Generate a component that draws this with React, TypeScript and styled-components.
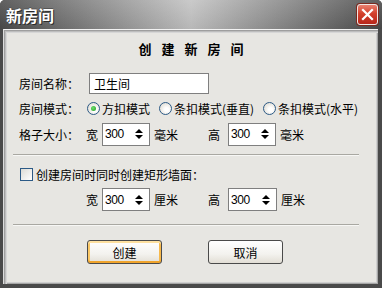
import React from "react";
import styled, { createGlobalStyle } from "styled-components";

const GlobalStyle = createGlobalStyle`
  html, body {
    margin: 0;
    padding: 0;
    background: #ffffff;
  }
  body {
    font-family: "Noto Sans CJK SC", "Liberation Sans", sans-serif;
    font-size: 12px;
    color: #000;
  }
`;

const Window = styled.div`
  width: 382px;
  height: 288px;
  display: flex;
  flex-direction: column;
  background: #4a4a4a;
  border-radius: 5px 5px 0 0;
  overflow: hidden;
`;

const TitleBar = styled.div`
  height: 29px;
  flex: none;
  display: flex;
  align-items: center;
  justify-content: space-between;
  padding: 0 4px 0 6px;
  background:
    linear-gradient(to bottom, rgba(255, 255, 255, 0.12), rgba(0, 0, 0, 0.06)),
    linear-gradient(to right, #4b4b4b 0%, #858585 24%, #c3c3c3 50%, #858585 76%, #4a4a4a 100%);
`;

const Title = styled.span`
  color: #fff;
  font-size: 16px;
  font-weight: bold;
  text-shadow: 1px 1px 0 #2a2a2a, -1px 0 0 #555, 0 -1px 0 #555;
`;

const CloseButton = styled.div`
  width: 21px;
  height: 21px;
  box-sizing: border-box;
  border: 1px solid #f0e6e4;
  border-radius: 3px;
  background: linear-gradient(to bottom, #e9806f, #d3402c 45%, #b8261a);
  display: flex;
  align-items: center;
  justify-content: center;
  box-shadow: 0 0 0 1px #7a2a20;
`;

const Client = styled.div`
  flex: 1;
  margin: 0 4px 4px 3px;
  background: #e7e6e2;
  border-top: 1px solid #f2f2f2;
  border-left: 1px solid #dcdcdc;
  box-shadow:
    inset 1px 1px 0 #9e9e9e,
    inset 2px 2px 0 #bdbdbd,
    inset 3px 3px 0 #d6d6d6,
    inset -1px -1px 0 #a6a6a6,
    inset -2px -2px 0 #cfcfcf;
  display: flex;
  flex-direction: column;
  padding-left: 15px;
`;

const Heading = styled.div`
  margin: 8px 0 0 -15px;
  height: 22px;
  line-height: 22px;
  text-align: center;
  font-size: 13px;
  font-weight: bold;
  letter-spacing: 10px;
  padding-left: 10px;
`;

const Row = styled.div<{ $top: number; $h: number }>`
  display: flex;
  align-items: center;
  height: ${(p) => p.$h}px;
  margin-top: ${(p) => p.$top}px;
  white-space: nowrap;
`;

const Label = styled.span<{ $w: number }>`
  width: ${(p) => p.$w}px;
  flex: none;
`;

const TextInput = styled.div`
  width: 120px;
  height: 21px;
  box-sizing: border-box;
  margin-left: 2px;
  border: 1px solid #7f7f7f;
  background: #fff;
  padding-left: 4px;
  line-height: 19px;
`;

const RadioItem = styled.label<{ $w?: number }>`
  display: flex;
  align-items: center;
  gap: 2px;
  ${(p) => (p.$w ? `width: ${p.$w}px;` : "")}
  flex: none;
`;

const RadioDot = styled.span<{ $checked?: boolean }>`
  width: 13px;
  height: 13px;
  box-sizing: border-box;
  border-radius: 50%;
  border: 1px solid #2c5a86;
  background: radial-gradient(circle at 60% 60%, #ffffff 20%, #e6e3dc 70%, #cfcabe);
  display: flex;
  align-items: center;
  justify-content: center;
  &::after {
    content: "";
    display: ${(p) => (p.$checked ? "block" : "none")};
    width: 5px;
    height: 5px;
    border-radius: 50%;
    background: radial-gradient(circle at 40% 40%, #6fe06f, #1f9a1f);
  }
`;

const Spinner = styled.div<{ $w: number }>`
  width: ${(p) => p.$w}px;
  height: 23px;
  box-sizing: border-box;
  border: 1px solid #7f7f7f;
  background: #fff;
  display: flex;
  align-items: center;
  justify-content: space-between;
  padding: 0 6px 0 2px;
  flex: none;
`;

const SpinValue = styled.span`
  font-family: "Liberation Sans", sans-serif;
  font-size: 12px;
  letter-spacing: -0.4px;
`;

const Unit = styled.span<{ $w?: number }>`
  margin-left: 4px;
  ${(p) => (p.$w ? `width: ${p.$w}px;` : "")}
  flex: none;
`;

const Separator = styled.div<{ $top: number }>`
  margin: ${(p) => p.$top}px 0 0 -6px;
  width: 346px;
  height: 0;
  border-top: 1px solid #a9a8a2;
  border-bottom: 1px solid #f7f7f5;
`;

const CheckBox = styled.span`
  width: 13px;
  height: 13px;
  box-sizing: border-box;
  margin: 0 3px 0 1px;
  border: 1px solid #2c5a86;
  background: linear-gradient(135deg, #dcdbd5, #ffffff);
  flex: none;
`;

const ButtonRow = styled.div`
  display: flex;
  gap: 46px;
  margin-top: 14px;
  padding-left: 68px;
`;

const Button = styled.div<{ $default?: boolean }>`
  width: 75px;
  height: 24px;
  box-sizing: border-box;
  border: 1px solid #4a4a4a;
  border-radius: 3px;
  background: linear-gradient(to bottom, #ffffff, #f3f2ee 60%, #e2ded5);
  display: flex;
  align-items: center;
  justify-content: center;
  ${(p) =>
    p.$default
      ? `box-shadow: inset 0 2px 0 #fde0a0, inset 0 -2px 0 #f0a42c, inset 2px 0 0 #fbc866, inset -2px 0 0 #f7b94b;`
      : ""}
`;

const Arrows = () => (
  <svg width="8" height="12" viewBox="0 0 8 12">
    <polygon points="0,5 4,1 8,5" fill="#000" />
    <polygon points="0,7 8,7 4,11" fill="#000" />
  </svg>
);

const CloseIcon = () => (
  <svg width="13" height="13" viewBox="0 0 13 13">
    <path d="M2 2 L11 11 M11 2 L2 11" stroke="#fff" strokeWidth="2.2" strokeLinecap="square" />
  </svg>
);

// 宽 / 高 pair of spin boxes, used for the tile size and the wall size
const SizeFields = ({ label, unit, highWidth }: { label?: string; unit: string; highWidth: number }) => (
  <>
    <Label $w={67}>{label ?? "\u00a0"}</Label>
    <Label $w={16}>宽</Label>
    <Spinner $w={48}>
      <SpinValue>300</SpinValue>
      <Arrows />
    </Spinner>
    <Unit $w={54}>{unit}</Unit>
    <Label $w={20}>高</Label>
    <Spinner $w={highWidth}>
      <SpinValue>300</SpinValue>
      <Arrows />
    </Spinner>
    <Unit>{unit}</Unit>
  </>
);

export default function App() {
  return (
    <>
      <GlobalStyle />
      <Window>
        <TitleBar>
          <Title>新房间</Title>
          <CloseButton>
            <CloseIcon />
          </CloseButton>
        </TitleBar>
        <Client>
          <Heading>创建新房间</Heading>

          <Row $top={12} $h={22}>
            <Label $w={68}>房间名称：</Label>
            <TextInput>卫生间</TextInput>
          </Row>

          <Row $top={4} $h={20}>
            <Label $w={68}>房间模式：</Label>
            <RadioItem $w={72}>
              <RadioDot $checked />
              方扣模式
            </RadioItem>
            <RadioItem $w={104}>
              <RadioDot />
              条扣模式(垂直)
            </RadioItem>
            <RadioItem>
              <RadioDot />
              条扣模式(水平)
            </RadioItem>
          </Row>

          <Row $top={4} $h={24}>
            <SizeFields label="格子大小：" unit="毫米" highWidth={48} />
          </Row>

          <Separator $top={8} />

          <Row $top={8} $h={20}>
            <CheckBox />
            创建房间时同时创建矩形墙面：
          </Row>

          <Row $top={4} $h={23}>
            <SizeFields unit="厘米" highWidth={49} />
          </Row>

          <Separator $top={13} />

          <ButtonRow>
            <Button $default>创建</Button>
            <Button>取消</Button>
          </ButtonRow>
        </Client>
      </Window>
    </>
  );
}
